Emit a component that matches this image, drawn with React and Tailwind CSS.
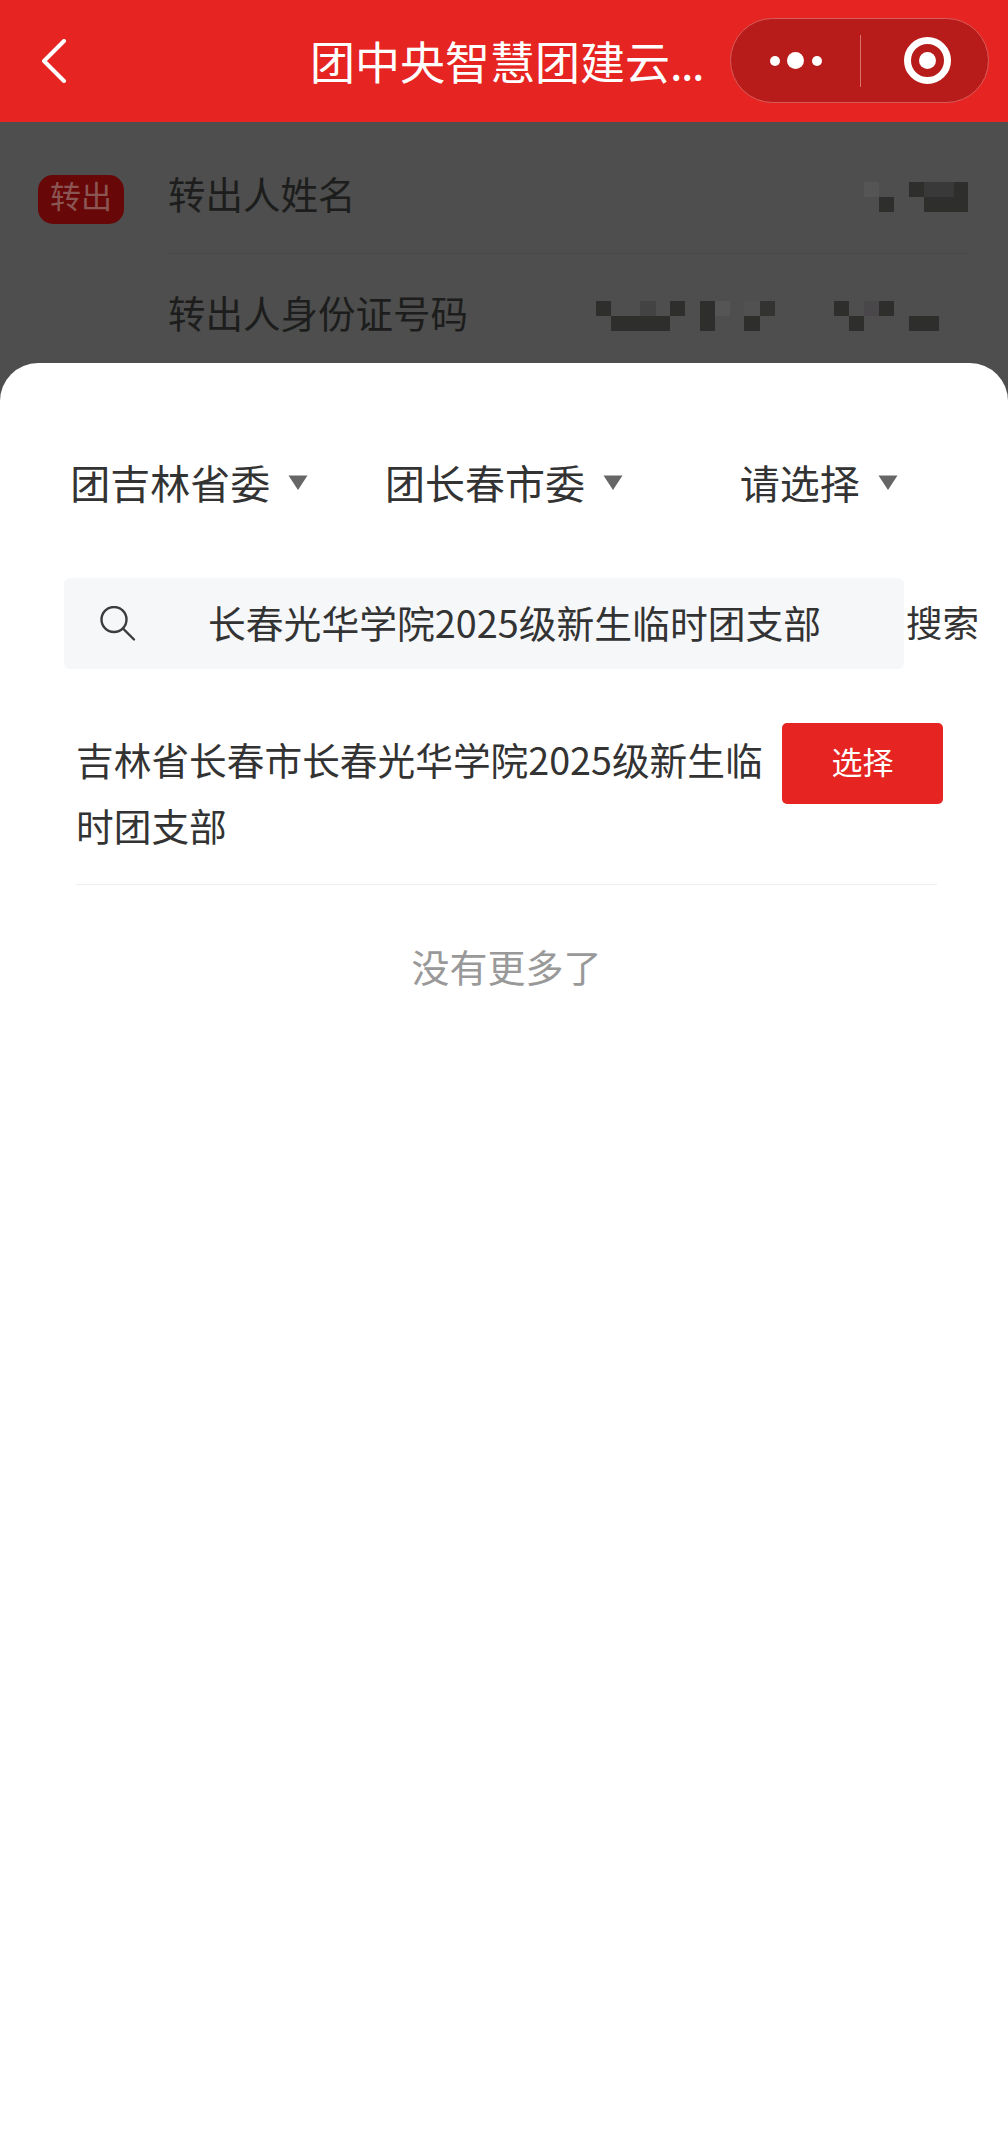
const font = { fontFamily: '"Noto Sans CJK SC", "Noto Sans", sans-serif' };

const mosaic = [
  [304, 32, 15, 15, '#555555'], [319, 47, 15, 15, '#2e2f2d'], [349, 32, 15, 15, '#2e2f2d'], [364, 32, 30, 15, '#3a393a'],
  [394, 32, 14, 15, '#2e2f2d'], [364, 47, 44, 15, '#2e2f2d'],
  [36, 151, 15, 15, '#2e2f2d'], [80, 151, 16, 15, '#434343'], [110, 151, 15, 15, '#2e2f2d'], [51, 166, 59, 15, '#2e2f2d'],
  [140, 151, 15, 30, '#2e2f2d'], [155, 151, 15, 15, '#555555'], [184, 151, 16, 15, '#505150'], [184, 166, 16, 15, '#2e2f2d'],
  [200, 151, 15, 15, '#333432'], [274, 151, 15, 15, '#2e2f2d'], [289, 166, 15, 15, '#2e2f2d'], [304, 151, 15, 15, '#4a474a'],
  [319, 151, 15, 15, '#2e2f2d'], [349, 166, 30, 15, '#2e2f2d'],
];

function Caret() {
  return (
    <svg width="20" height="15" viewBox="0 0 20 15" className="shrink-0">
      <path d="M0.5 0.5h19L10 15z" fill="#666666" />
    </svg>
  );
}

function Picker({ label }) {
  return (
    <div className="flex items-center justify-center gap-[18px]">
      <span className="text-[40px] leading-[56px] text-[#333333]">{label}</span>
      <Caret />
    </div>
  );
}

export default function App() {
  return (
    <div style={font} className="relative flex h-[2131px] w-[1008px] flex-col overflow-hidden bg-[#4d4e4d]">
      <header className="relative flex h-[122px] shrink-0 items-center bg-[#e62422]">
        <svg width="26" height="44" viewBox="0 0 26 44" className="ml-[41px] shrink-0" fill="none">
          <path d="M23 2 3 22l20 20" stroke="#ffffff" strokeWidth="4" strokeLinecap="round" strokeLinejoin="round" />
        </svg>
        <h1 className="ml-[243px] w-[395px] whitespace-nowrap text-[45px] font-normal leading-[64px] text-white">
          团中央智慧团建云<span className="tracking-[-1.5px]">...</span>
        </h1>
        <div className="absolute right-[19px] top-[18px] flex h-[85px] w-[259px] items-center rounded-[43px] border border-[#d85c5a] bg-[#b81c1a]">
          <div className="flex w-[129px] items-center justify-center gap-[7.5px]">
            <span className="h-[10px] w-[10px] rounded-full bg-white" />
            <span className="h-[17px] w-[17px] rounded-full bg-white" />
            <span className="h-[10px] w-[10px] rounded-full bg-white" />
          </div>
          <div className="h-[52px] w-px bg-[#d8716f]" />
          <div className="flex flex-1 items-center justify-center pl-[5px]">
            <div className="flex h-[47px] w-[47px] items-center justify-center rounded-full border-[7px] border-white">
              <span className="h-[17px] w-[17px] rounded-full bg-white" />
            </div>
          </div>
        </div>
      </header>

      <section className="relative h-[241px] shrink-0">
        <div className="absolute left-[38px] top-[53px] flex h-[49px] w-[86px] items-center justify-center rounded-[15px] bg-[#680707] pb-[10px] text-[31px] leading-none text-[#8a5654]">转出</div>
        <div className="ml-[168px] mr-[38px]">
          <div className="flex h-[132px] items-center border-b border-[#474847] pt-[12px] text-[37.5px] text-[#1c1d1c]">转出人姓名</div>
          <div className="flex h-[118px] items-center pb-[2px] text-[37.5px] text-[#1c1d1c]">转出人身份证号码</div>
        </div>
        <svg width="448" height="200" viewBox="0 0 448 200" className="absolute left-[560px] top-[28px]">
          {mosaic.map(([x, y, w, h, c], i) => (
            <rect key={i} x={x} y={y} width={w} height={h} fill={c} />
          ))}
        </svg>
      </section>

      <main className="flex-1 rounded-t-[38px] bg-white">
        <div className="grid grid-cols-3 px-[32px] pt-[91px]">
          <Picker label="团吉林省委" />
          <Picker label="团长春市委" />
          <Picker label="请选择" />
        </div>

        <div className="mt-[68px] flex items-center pl-[64px]">
          <div className="flex h-[91px] w-[840px] shrink-0 items-center rounded-[6px] bg-[#f6f7f9]">
            <svg width="36" height="36" viewBox="0 0 36 36" className="ml-[36px] shrink-0" fill="none">
              <circle cx="14" cy="13.5" r="12.5" stroke="#3c3c3c" strokeWidth="2.4" />
              <path d="M23 22.5 34 33.5" stroke="#3c3c3c" strokeWidth="2.4" strokeLinecap="round" />
            </svg>
            <span className="ml-[72px] whitespace-nowrap pb-[4px] text-[37.8px] leading-[52px] text-[#333333]">长春光华学院2025级新生临时团支部</span>
          </div>
          <span className="ml-[2px] whitespace-nowrap pb-[4px] text-[36.5px] leading-[52px] text-[#333333]">搜索</span>
        </div>

        <div className="ml-[76px] mr-[71px] mt-[54px] flex items-start justify-between border-b border-[#eeeeee] pb-[26px]">
          <p className="w-[696px] pt-[3px] text-[37.7px] leading-[66px] text-[#333333]">吉林省长春市长春光华学院2025级新生临时团支部</p>
          <button className="mr-[-6px] h-[81px] w-[161px] shrink-0 rounded-[5px] bg-[#e62422] pb-[4px] text-[31px] text-white">选择</button>
        </div>

        <p className="mt-[53px] pl-[5px] text-center text-[38px] leading-[56px] text-[#999999]">没有更多了</p>
      </main>
    </div>
  );
}
